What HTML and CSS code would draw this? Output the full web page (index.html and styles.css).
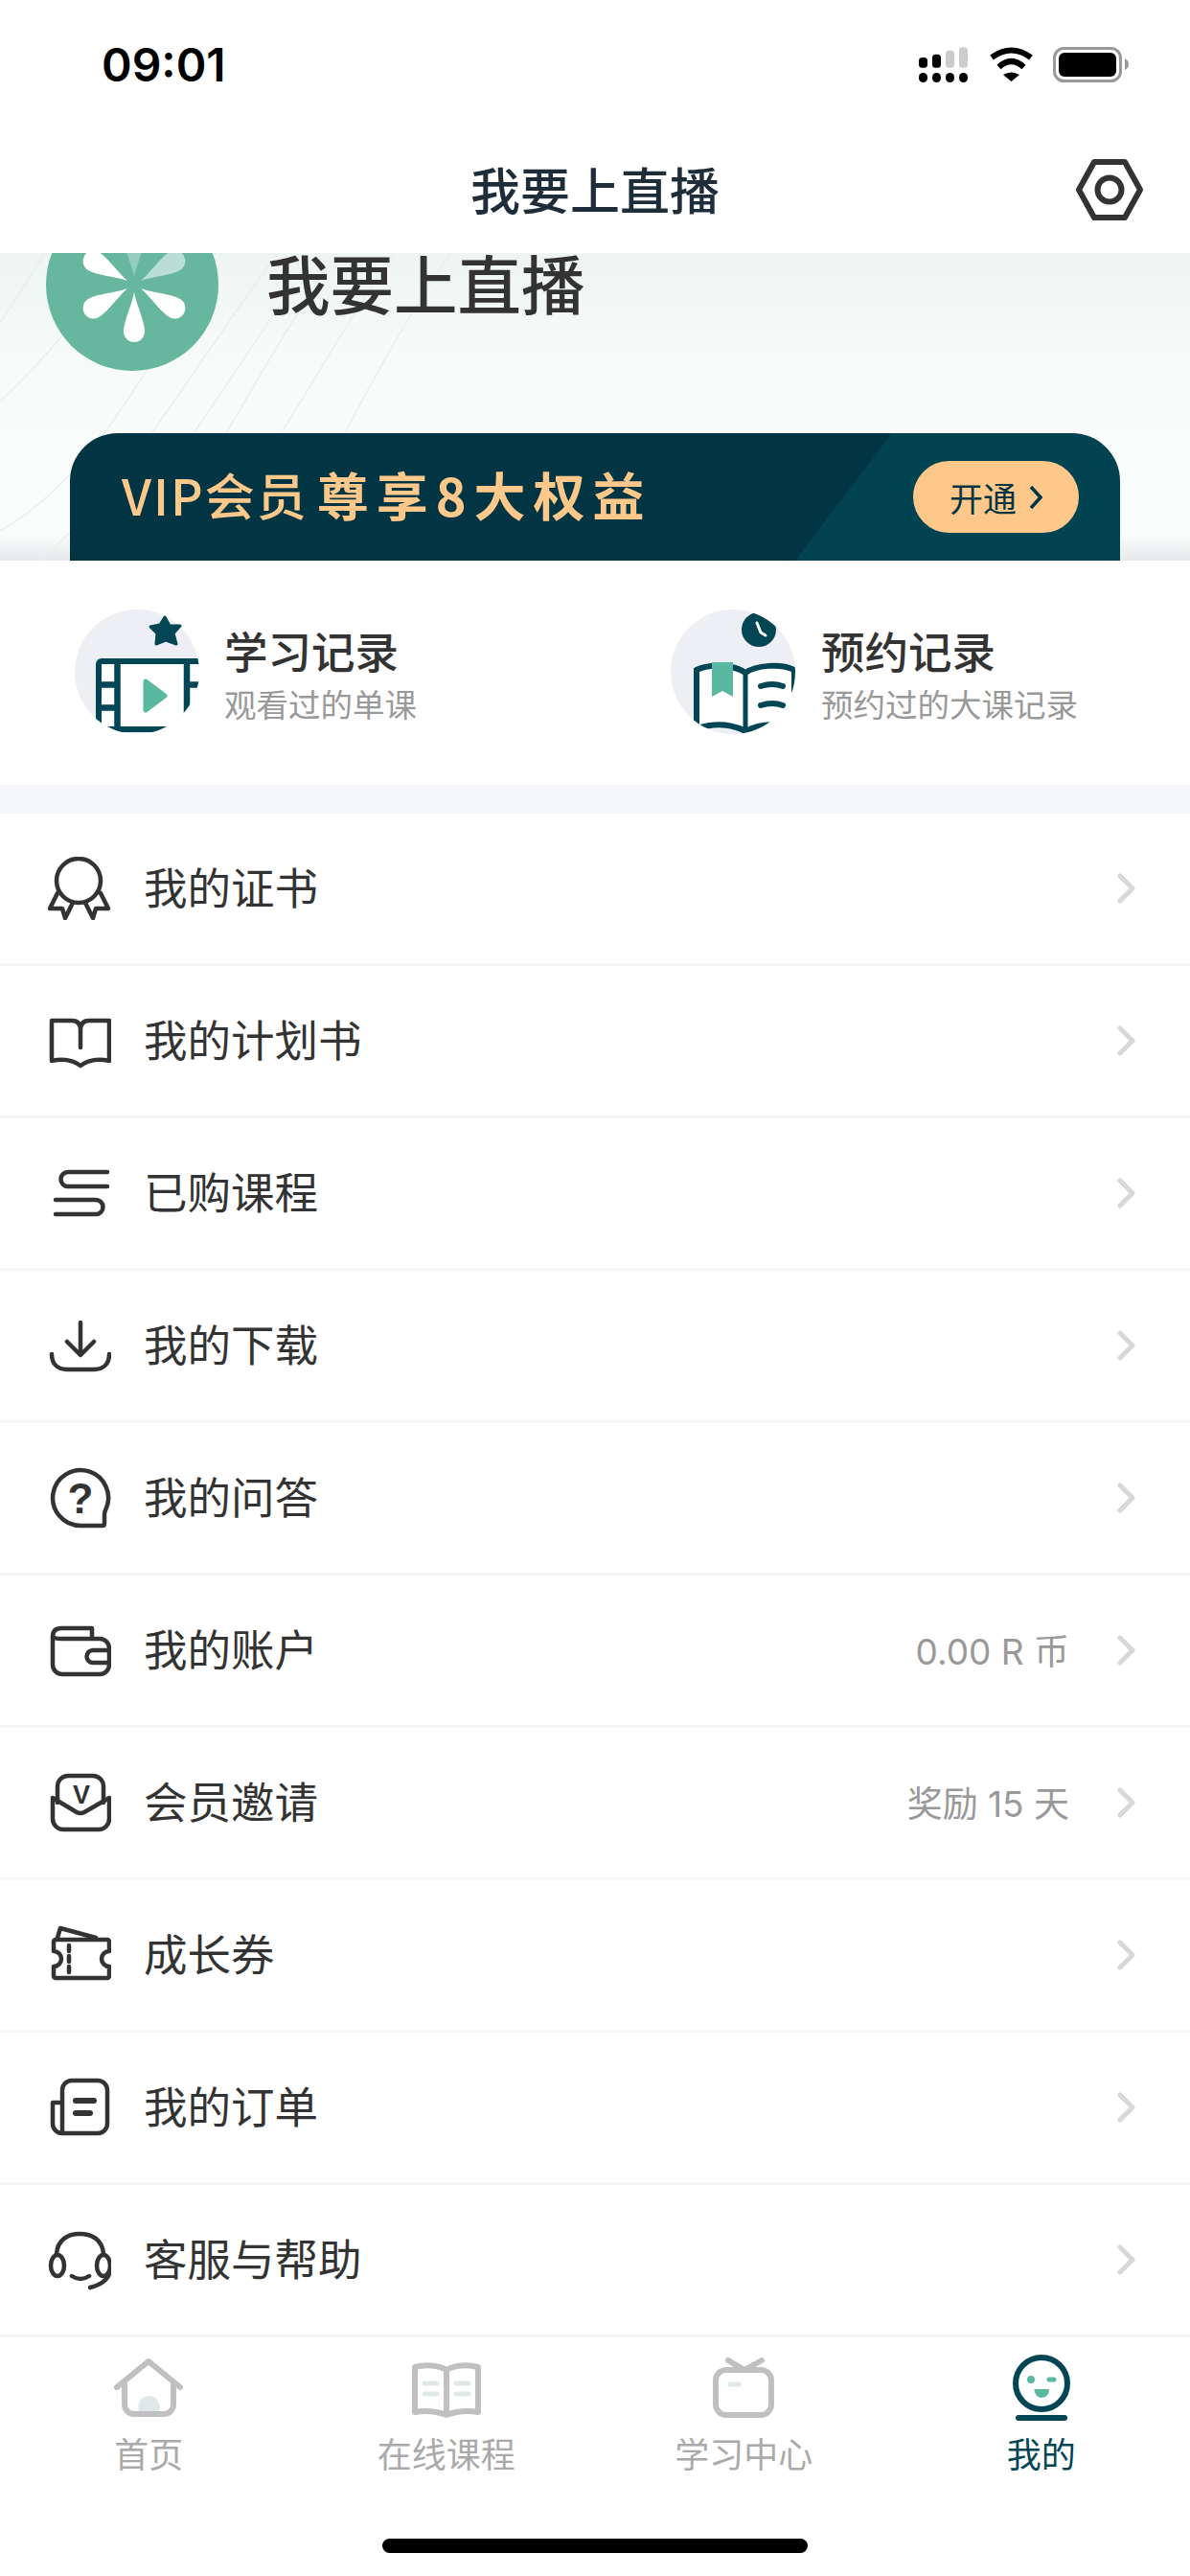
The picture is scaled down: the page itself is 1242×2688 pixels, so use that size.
FILE: index.html

```html
<!DOCTYPE html>
<html lang="zh-CN">
<head>
    <meta charset="UTF-8">
    <meta name="viewport" content="width=device-width, initial-scale=1.0">
    <title>我要上直播</title>
    <link rel="stylesheet" href="styles.css">
</head>
<body>
    <div class="page">
        <header class="top">
            <div class="status-bar">
                <span class="status-time">09:01</span>
                <svg class="status-icons" width="219" height="40" viewBox="0 0 219 40">
                    <rect x="0" y="12" width="9" height="10.7" rx="3.5"/>
                    <rect x="14" y="8.7" width="9" height="14" rx="3.5"/>
                    <rect x="28" y="4.7" width="9" height="18" rx="3.5" fill="#ccc"/>
                    <rect x="42" y="1.3" width="9" height="21.4" rx="3.5" fill="#ccc"/>
                    <rect x="0" y="28" width="9" height="10" rx="4.5"/>
                    <rect x="14" y="28" width="9" height="10" rx="4.5"/>
                    <rect x="28" y="28" width="9" height="10" rx="4.5"/>
                    <rect x="42" y="28" width="9" height="10" rx="4.5"/>
                    <path d="M76 12Q96.500 -3 117 12M83.500 22Q96.500 10 109.500 22" fill="none" stroke="#000" stroke-width="6"/>
                    <path d="M88 30Q96.500 25 105 30L96.500 37Z"/>
                    <rect x="141.500" y="2.500" width="69" height="34" rx="10" fill="none" stroke="#999" stroke-width="3"/>
                    <rect x="146" y="7" width="60" height="25" rx="6"/>
                    <path d="M215 13Q219 15 219 19Q219 23 215 25Z" fill="#999"/>
                </svg>
            </div>
            <div class="nav-bar">
                <h1 class="nav-title">我要上直播</h1>
                <svg class="nav-gear" width="70" height="64" viewBox="0 0 70 64">
                    <path d="M19 3H51L67 32L51 61H19L3 32Z"/>
                    <circle cx="35" cy="32" r="12.500"/>
                </svg>
            </div>
        </header>

        <section class="profile">
            <svg class="profile-lines" width="1242" height="321" viewBox="0 0 1242 321">
                <path d="M0 73Q22 40 47 0M0 155Q70 90 128 0M0 290C90 240 150 130 225 0M40 321C130 250 200 120 290 0M130 290C190 210 260 100 330 0M235 190C270 130 310 60 352 0M295 185C330 130 370 60 410 0M360 188C390 130 430 60 470 0"/>
            </svg>
            <div class="profile-user">
                <svg class="avatar" width="180" height="180" viewBox="0 0 180 180">
                    <circle cx="90" cy="90" r="90" fill="#67b79e"/>
                    <g fill="#fff">
                        <path d="M92 98C90 110 81 128 81 139A11 11 0 0 0 103 139C103 128 94 110 92 98Z"/>
                        <path d="M92 98C90 110 81 128 81 139A11 11 0 0 0 103 139C103 128 94 110 92 98Z" transform="rotate(60 92 90)"/>
                        <path d="M92 98C90 110 81 128 81 139A11 11 0 0 0 103 139C103 128 94 110 92 98Z" transform="rotate(-60 92 90)"/>
                        <path d="M92 98C90 110 81 128 81 139A11 11 0 0 0 103 139C103 128 94 110 92 98Z" transform="rotate(120 92 90)"/>
                        <path d="M92 98C90 110 81 128 81 139A11 11 0 0 0 103 139C103 128 94 110 92 98Z" transform="rotate(-120 92 90)" opacity="0.55"/>
                        <path d="M92 98C90 110 81 128 81 139A11 11 0 0 0 103 139C103 128 94 110 92 98Z" transform="rotate(180 92 90)" opacity="0.3"/>
                    </g>
                </svg>
                <span class="user-name">我要上直播</span>
            </div>
            <div class="vip-banner">
                <span class="vip-text"><span class="vip-name">VIP会员</span><span class="vip-perk">尊享8大权益</span></span>
                <span class="vip-btn">开通
                    <svg width="14" height="26" viewBox="0 0 14 26"><path d="M2 2L12 13L2 24" fill="none" stroke="#023543" stroke-width="3.500"/></svg>
                </span>
            </div>
        </section>

        <section class="records">
            <div class="record">
                <svg class="record-icon" width="130" height="130" viewBox="0 0 130 130">
                    <defs><clipPath id="clipA"><circle cx="65" cy="65" r="65"/></clipPath></defs>
                    <circle cx="65" cy="65" r="65" fill="#eeeff5"/>
                    <g clip-path="url(#clipA)">
                        <rect x="25" y="54" width="120" height="71" rx="3" fill="#fff" stroke="#024656" stroke-width="6"/>
                        <path d="M44.500 54V125M117 54V125M25 78.500H44.500M25 102.500H44.500M117 78.500H130" fill="none" stroke="#024656" stroke-width="6.500"/>
                    </g>
                    <path d="M74 75L94 90L74 105Z" fill="#59b8a0" stroke="#59b8a0" stroke-width="5" stroke-linejoin="round"/>
                    <path d="M94 8L99 17L110 17L103 25L106 36L95 32L85 36L86 25L79 18L89 16Z" fill="#024656" stroke="#024656" stroke-width="3" stroke-linejoin="round"/>
                </svg>
                <div class="record-text">
                    <div class="record-title">学习记录</div>
                    <div class="record-sub">观看过的单课</div>
                </div>
            </div>
            <div class="record">
                <svg class="record-icon" width="132" height="130" viewBox="0 0 132 130">
                    <defs><clipPath id="clipB"><circle cx="66" cy="65" r="65"/></clipPath></defs>
                    <circle cx="66" cy="65" r="65" fill="#eeeff5"/>
                    <g clip-path="url(#clipB)">
                        <circle cx="93" cy="21" r="18" fill="#024656"/>
                        <path d="M79 66C68 58 42 56 28 63V124C48 118 66 120 79 127C92 120 110 118 130 124V63C116 56 90 58 79 66Z" fill="#fff" stroke="#024656" stroke-width="6"/>
                        <path d="M79 66V127" fill="none" stroke="#024656" stroke-width="5"/>
                    </g>
                    <path d="M91 14L95 24L100 27" fill="none" stroke="#fff" stroke-width="3" stroke-linecap="round"/>
                    <path d="M44 55H66V91L55 85L44 91Z" fill="#59b8a0"/>
                    <path d="M95 80Q107 76 118 80M95 100Q107 96 118 100" fill="none" stroke="#024656" stroke-width="6" stroke-linecap="round"/>
                </svg>
                <div class="record-text">
                    <div class="record-title">预约记录</div>
                    <div class="record-sub">预约过的大课记录</div>
                </div>
            </div>
        </section>

        <ul class="menu">
            <li class="menu-row">
                <svg class="menu-icon" width="66" height="66" viewBox="0 0 66 66">
                    <circle cx="32" cy="25" r="23"/>
                    <path d="M10 38L2 54H15L18 64L26 48M55 38L63 54H50L47 64L39 48"/>
                </svg>
                <span class="menu-label">我的证书</span>
                <svg class="chevron" width="19" height="32" viewBox="0 0 19 32"><path d="M3 3L16 16L3 29"/></svg>
            </li>
            <li class="menu-row">
                <svg class="menu-icon" width="66" height="66" viewBox="0 0 66 66">
                    <path d="M34 40V22Q34 12 25 12H4V54Q22 50 34 59Q46 50 64 54V12H43Q34 12 34 22"/>
                </svg>
                <span class="menu-label">我的计划书</span>
                <svg class="chevron" width="19" height="32" viewBox="0 0 19 32"><path d="M3 3L16 16L3 29"/></svg>
            </li>
            <li class="menu-row">
                <svg class="menu-icon" width="66" height="66" viewBox="0 0 66 66">
                    <path d="M62 11H21A7.500 7.500 0 0 0 21 26H62M8 40H50A7.500 7.500 0 0 1 50 55H8"/>
                </svg>
                <span class="menu-label">已购课程</span>
                <svg class="chevron" width="19" height="32" viewBox="0 0 19 32"><path d="M3 3L16 16L3 29"/></svg>
            </li>
            <li class="menu-row">
                <svg class="menu-icon" width="66" height="66" viewBox="0 0 66 66">
                    <path d="M34 9V42M20 29L34 43L48 29M4 42C4 52 10 58 20 58H48C58 58 64 52 64 42"/>
                </svg>
                <span class="menu-label">我的下载</span>
                <svg class="chevron" width="19" height="32" viewBox="0 0 19 32"><path d="M3 3L16 16L3 29"/></svg>
            </li>
            <li class="menu-row">
                <svg class="menu-icon" width="66" height="66" viewBox="0 0 66 66">
                    <path d="M60 46A29 29 0 1 0 34 62H57Q59 62 59 60V50Q59 48 60 46Z"/>
                    <text class="icon-text" x="34" y="49" text-anchor="middle" font-size="44">?</text>
                </svg>
                <span class="menu-label">我的问答</span>
                <svg class="chevron" width="19" height="32" viewBox="0 0 19 32"><path d="M3 3L16 16L3 29"/></svg>
            </li>
            <li class="menu-row">
                <svg class="menu-icon" width="66" height="66" viewBox="0 0 66 66">
                    <path d="M46 21V10H14Q5 10 5 19V48A10 10 0 0 0 15 58H54A10 10 0 0 0 64 48V31A10 10 0 0 0 54 21H14Q7 21 5 19"/>
                    <path d="M64 33H47A6.500 6.500 0 0 0 47 46H64"/>
                </svg>
                <span class="menu-label">我的账户</span>
                <span class="menu-value">0.00 R 币</span>
                <svg class="chevron" width="19" height="32" viewBox="0 0 19 32"><path d="M3 3L16 16L3 29"/></svg>
            </li>
            <li class="menu-row">
                <svg class="menu-icon" width="66" height="66" viewBox="0 0 66 66">
                    <path d="M10 33V16A11 11 0 0 1 21 5H47A11 11 0 0 1 58 16V33"/>
                    <path d="M5 28V50A11 11 0 0 0 16 61H53A11 11 0 0 0 64 50V28L38 43Q34 45 30 43Z"/>
                    <text class="icon-text" x="35" y="34" text-anchor="middle" font-size="27">V</text>
                </svg>
                <span class="menu-label">会员邀请</span>
                <span class="menu-value">奖励 15 天</span>
                <svg class="chevron" width="19" height="32" viewBox="0 0 19 32"><path d="M3 3L16 16L3 29"/></svg>
            </li>
            <li class="menu-row">
                <svg class="menu-icon" width="66" height="66" viewBox="0 0 66 66">
                    <path d="M8 17H62A2 2 0 0 1 64 19V29A8 8 0 0 0 64 45V55A2 2 0 0 1 62 57H8A2 2 0 0 1 6 55V45A8 8 0 0 0 6 29V19A2 2 0 0 1 8 17Z"/>
                    <path d="M10 15L13 5L50 15"/>
                    <path d="M22 23V29M22 34V40M22 45V51"/>
                </svg>
                <span class="menu-label">成长券</span>
                <svg class="chevron" width="19" height="32" viewBox="0 0 19 32"><path d="M3 3L16 16L3 29"/></svg>
            </li>
            <li class="menu-row">
                <svg class="menu-icon" width="66" height="66" viewBox="0 0 66 66">
                    <path d="M15 60V15A10 10 0 0 1 25 5H52A10 10 0 0 1 62 15V50A10 10 0 0 1 52 60H15A10 10 0 0 1 5 50V28H15"/>
                    <path class="icon-bold" d="M29 26H48M29 39H44"/>
                </svg>
                <span class="menu-label">我的订单</span>
                <svg class="chevron" width="19" height="32" viewBox="0 0 19 32"><path d="M3 3L16 16L3 29"/></svg>
            </li>
            <li class="menu-row">
                <svg class="menu-icon" width="66" height="66" viewBox="0 0 66 66">
                    <path d="M9 27C10 12 21 6 33 6C46 6 57 12 58 27"/>
                    <ellipse cx="10" cy="39" rx="7" ry="11"/>
                    <ellipse cx="58" cy="39" rx="7" ry="11"/>
                    <path d="M25 50Q34 56 43 50M64 48Q60 58 44 62"/>
                </svg>
                <span class="menu-label">客服与帮助</span>
                <svg class="chevron" width="19" height="32" viewBox="0 0 19 32"><path d="M3 3L16 16L3 29"/></svg>
            </li>
        </ul>

        <nav class="tab-bar">
            <div class="tabs">
                <div class="tab">
                    <svg class="tab-icon" width="72" height="72" viewBox="0 0 72 72">
                        <rect class="tab-light" x="25.500" y="56" width="22" height="6"/>
                        <circle class="tab-light" cx="36.500" cy="56" r="11"/>
                        <path d="M3 36L36 9L69 36M11 33V54A10 10 0 0 0 21 64H52A10 10 0 0 0 62 54V33"/>
                    </svg>
                    <span class="tab-label">首页</span>
                </div>
                <div class="tab">
                    <svg class="tab-icon" width="72" height="72" viewBox="0 0 72 72">
                        <path d="M36 18C28 13 14 12 3 15V62Q20 59 36 65Q52 59 69 62V15C58 12 44 13 36 18ZM36 18V64"/>
                        <path class="tab-light-line" d="M13 32H26M13 43H26M46 32H59M46 43H59"/>
                    </svg>
                    <span class="tab-label">在线课程</span>
                </div>
                <div class="tab">
                    <svg class="tab-icon" width="72" height="72" viewBox="0 0 72 72">
                        <rect x="7" y="18" width="58" height="47" rx="11"/>
                        <path d="M20 8L37 18L55 8"/>
                        <path class="tab-light-line" d="M22 33H31"/>
                    </svg>
                    <span class="tab-label">学习中心</span>
                </div>
                <div class="tab tab-active">
                    <svg class="tab-icon" width="72" height="72" viewBox="0 0 72 72">
                        <circle cx="36" cy="32" r="27"/>
                        <path class="tab-base" d="M12 68H60"/>
                        <circle class="tab-face" cx="25" cy="28" r="4"/>
                        <path class="tab-wink" d="M44 28H49"/>
                        <path class="tab-face" d="M28.500 38H44C44 43 41 47 36 47C32 47 28.500 43 28.500 38Z"/>
                    </svg>
                    <span class="tab-label">我的</span>
                </div>
            </div>
            <div class="home-indicator"></div>
        </nav>
    </div>
</body>
</html>
```

FILE: styles.css

```css
* {
    box-sizing: border-box;
}

body {
    margin: 0;
    background: #fff;
    font-family: "Noto Sans CJK SC", "Noto Sans", sans-serif;
    color: #333;
}

.page {
    width: 1242px;
    height: 2688px;
    overflow: hidden;
    display: flex;
    flex-direction: column;
}

/* top bars, the scrolled profile slides under them */
.top {
    position: relative;
    z-index: 2;
    background: #fff;
}

.status-bar {
    height: 132px;
    padding: 3px 64px 0 106px;
    display: flex;
    justify-content: space-between;
    align-items: center;
}

.status-time {
    font-family: Inter, "Liberation Sans", sans-serif;
    font-size: 48px;
    font-weight: 600;
    color: #000;
}

.nav-bar {
    height: 132px;
    padding-right: 49px;
    display: flex;
    justify-content: flex-end;
    align-items: center;
    position: relative;
}

.nav-title {
    position: absolute;
    left: 0;
    right: 0;
    top: 30px;
    margin: 0;
    text-align: center;
    font-size: 52px;
    line-height: 70px;
    font-weight: 500;
    color: #1f2d3a;
}

.nav-gear {
    fill: none;
    stroke: #333;
    stroke-width: 6;
    stroke-linejoin: round;
}

/* profile */
.profile {
    height: 321px;
    position: relative;
    background: linear-gradient(#eef5f3 0, #f6faf9 100px, #fbfdfc 250px, #fbfcfc 293px, #e6e9eb 321px);
}

.profile-lines {
    position: absolute;
    left: 0;
    top: 0;
    fill: none;
    stroke: #e5f2ee;
    stroke-width: 1.5;
}

.profile-user {
    position: relative;
    margin: -57px 0 0 48px;
    height: 180px;
    display: flex;
    align-items: center;
    gap: 50px;
}

.user-name {
    margin-bottom: 6px;
    font-size: 66.500px;
    line-height: 60px;
    font-weight: 500;
    color: #333;
}

.vip-banner {
    position: relative;
    margin: 65px 73px 0;
    height: 133px;
    padding: 0 43px 0 54px;
    border-radius: 50px 50px 0 0;
    background: linear-gradient(127.2deg, #023543 683px, #024352 684px);
    display: flex;
    justify-content: space-between;
    align-items: center;
}

.vip-text {
    margin-bottom: 6px;
    display: flex;
    align-items: center;
    gap: 9px;
    color: #fec88a;
}

.vip-name {
    font-size: 52px;
    font-weight: 500;
    letter-spacing: 2px;
}

.vip-perk {
    font-size: 54px;
    font-weight: 700;
    letter-spacing: 8px;
}

.vip-btn {
    width: 173px;
    height: 75px;
    border-radius: 38px;
    background: #fec88a;
    color: #023543;
    font-size: 35px;
    display: flex;
    justify-content: center;
    align-items: center;
    gap: 13px;
}

/* records */
.records {
    height: 264px;
    padding-top: 51px;
    border-bottom: 30px solid #f5f6fa;
    display: grid;
    grid-template-columns: 621px 621px;
}

.record {
    padding-left: 78px;
    display: flex;
    align-items: flex-start;
    gap: 26px;
}

.record-text {
    padding-top: 15px;
}

.record-title {
    font-size: 45.500px;
    line-height: 54px;
    font-weight: 500;
    color: #333;
}

.record-sub {
    margin-top: 5px;
    font-size: 33.500px;
    line-height: 48px;
    color: #999;
}

/* menu list */
.menu {
    margin: 0;
    padding: 0;
    list-style: none;
}

.menu-row {
    height: 159px;
    padding: 0 57px 0 50px;
    border-bottom: 3px solid #f5f6fa;
    display: flex;
    align-items: center;
}

.menu-icon {
    flex: none;
    fill: none;
    stroke: #333;
    stroke-width: 4.5;
    stroke-linecap: round;
    stroke-linejoin: round;
}

.icon-text {
    font-family: "Liberation Sans", sans-serif;
    font-weight: 700;
    fill: #333;
    stroke: none;
}

.icon-bold {
    stroke-width: 6;
}

.menu-label {
    flex: 1;
    margin: 0 0 6px 34px;
    font-size: 45.500px;
    color: #333;
}

.menu-value {
    margin: 0 50px 3px 0;
    font-family: Inter, "Noto Sans CJK SC", sans-serif;
    font-size: 37px;
    color: #999;
}

.chevron {
    flex: none;
    fill: none;
    stroke: #d8d8d8;
    stroke-width: 5;
    stroke-linecap: round;
    stroke-linejoin: round;
}

/* tab bar */
.tab-bar {
    height: 249px;
}

.tabs {
    height: 210px;
    padding-top: 16px;
    display: grid;
    grid-template-columns: repeat(4, 1fr);
}

.tab {
    display: flex;
    flex-direction: column;
    align-items: center;
}

.tab-icon {
    fill: none;
    stroke: #c0c0c0;
    stroke-width: 6;
    stroke-linecap: round;
    stroke-linejoin: round;
}

.tab-light {
    fill: #e0e9ea;
    stroke: none;
}

.tab-light-line {
    stroke: #e0e9ea;
    stroke-width: 5;
}

.tab-label {
    margin-top: 7px;
    font-size: 36px;
    line-height: 50px;
    color: #aaa;
}

.tab-active .tab-icon {
    stroke: #024656;
}

.tab-active .tab-label {
    color: #024656;
}

.tab-active .tab-face {
    fill: #59b8a0;
    stroke: none;
}

.tab-active .tab-wink {
    stroke: #59b8a0;
    stroke-width: 5;
}

.tab-base {
    stroke-width: 6;
}

.home-indicator {
    width: 444px;
    height: 15px;
    margin: 0 auto;
    border-radius: 8px;
    background: #000;
}
```
